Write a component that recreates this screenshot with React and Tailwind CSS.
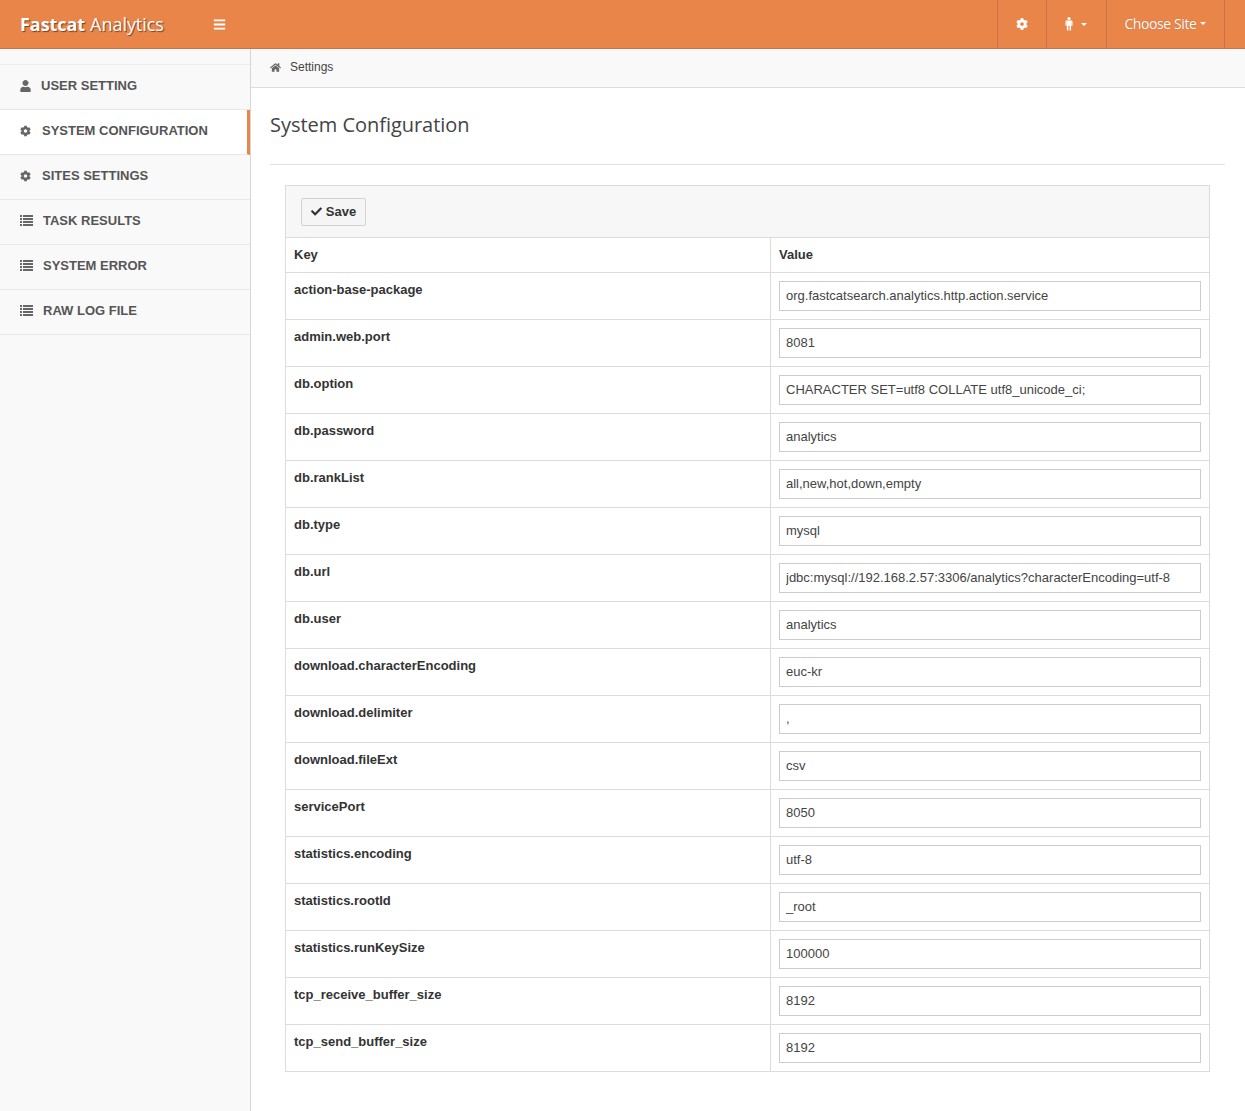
import { FaUser, FaCog, FaHome, FaCheck, FaBars } from "react-icons/fa";

function ListIcon() {
  return (
    <svg viewBox="0 0 13 11" className="w-[13px] h-[11px] text-[#666] shrink-0" fill="currentColor">
      <rect x="0" y="0" width="2" height="2" />
      <rect x="3" y="0" width="10" height="2" />
      <rect x="0" y="3" width="2" height="2" />
      <rect x="3" y="3" width="10" height="2" />
      <rect x="0" y="6" width="2" height="2" />
      <rect x="3" y="6" width="10" height="2" />
      <rect x="0" y="9" width="2" height="2" />
      <rect x="3" y="9" width="10" height="2" />
    </svg>
  );
}

function ManIcon() {
  return (
    <svg viewBox="0 0 8 14" className="w-[8px] h-[14px]" fill="currentColor">
      <circle cx="4" cy="1.6" r="1.6" />
      <path d="M1.6 3.6h4.8c.6 0 1.1.5 1.1 1.1v3.7c0 .8-1.1.8-1.1 0V5.2h-.3V13c0 1.1-1.5 1.1-1.5 0V8.8h-1.2V13c0 1.1-1.5 1.1-1.5 0V5.2h-.3v3.2c0 .8-1.1.8-1.1 0V4.7c0-.6.5-1.1 1.1-1.1z" />
    </svg>
  );
}

const menuItems = [
  { label: "USER SETTING", icon: FaUser, gap: "gap-[10px]" },
  { label: "SYSTEM CONFIGURATION", icon: FaCog, gap: "gap-[11px]", active: true },
  { label: "SITES SETTINGS", icon: FaCog, gap: "gap-[11px]" },
  { label: "TASK RESULTS", icon: ListIcon, gap: "gap-[10px]" },
  { label: "SYSTEM ERROR", icon: ListIcon, gap: "gap-[10px]" },
  { label: "RAW LOG FILE", icon: ListIcon, gap: "gap-[10px]" },
];

const settings = [
  ["action-base-package", "org.fastcatsearch.analytics.http.action.service"],
  ["admin.web.port", "8081"],
  ["db.option", "CHARACTER SET=utf8 COLLATE utf8_unicode_ci;"],
  ["db.password", "analytics"],
  ["db.rankList", "all,new,hot,down,empty"],
  ["db.type", "mysql"],
  ["db.url", "jdbc:mysql://192.168.2.57:3306/analytics?characterEncoding=utf-8"],
  ["db.user", "analytics"],
  ["download.characterEncoding", "euc-kr"],
  ["download.delimiter", ","],
  ["download.fileExt", "csv"],
  ["servicePort", "8050"],
  ["statistics.encoding", "utf-8"],
  ["statistics.rootId", "_root"],
  ["statistics.runKeySize", "100000"],
  ["tcp_receive_buffer_size", "8192"],
  ["tcp_send_buffer_size", "8192"],
];

function Caret() {
  return <span className="inline-block w-0 h-0 border-x-[3px] border-x-transparent border-t-[3px] border-t-white"></span>;
}

function Header() {
  return (
    <header className="h-[49px] bg-[#e98548] border-b border-b-[#c8744a] flex items-stretch text-white font-['Open_Sans',sans-serif]">
      <div className="w-[213px] flex items-center pl-[20px] text-[18px] leading-none [text-shadow:1px_1px_1px_rgba(0,0,0,0.5)] tracking-[-0.05px] whitespace-nowrap">
        <span className="font-bold">Fastcat</span>
        <span className="ml-[5px]">Analytics</span>
      </div>
      <div className="flex items-center">
        <FaBars className="w-[13px] h-[13px]" />
      </div>
      <div className="ml-auto flex items-stretch mr-[20px]">
        <div className="w-[49px] border-l border-l-[#c8744a] flex items-center justify-center">
          <FaCog className="w-[12px] h-[12px]" />
        </div>
        <div className="w-[60px] border-l border-l-[#c8744a] flex items-center justify-center gap-[8px] pr-[2px]">
          <ManIcon />
          <Caret />
        </div>
        <div className="w-[119px] border-x border-x-[#c8744a] flex items-center justify-center gap-[3px] text-[14px] tracking-[-0.4px] pb-[1px] pr-[1px] [text-shadow:0_0_1px_rgba(0,0,0,0.3)]">
          Choose Site
          <Caret />
        </div>
      </div>
    </header>
  );
}

function Sidebar() {
  return (
    <aside className="w-[251px] shrink-0 bg-[#f9f9f9] border-r border-r-[#d6d6d6] pt-[15px] font-['Liberation_Sans',sans-serif]">
      <ul className="border-t border-t-[#ececec]">
        {menuItems.map((item) => {
          const Icon = item.icon;
          return (
            <li
              key={item.label}
              className={
                item.active
                  ? "h-[45px] flex items-center pl-[20px] pb-[3px] border-b border-b-[#e8e8e8] border-r-[3px] border-r-[#e98548] bg-white"
                  : "h-[45px] flex items-center pl-[20px] pb-[3px] border-b border-b-[#e8e8e8]"
              }
            >
              <div className={"flex items-center text-[13px] font-bold text-[#555] leading-none " + item.gap}>
                {item.icon === ListIcon ? <ListIcon /> : <Icon className="w-[11px] h-[12px] text-[#666] shrink-0" />}
                {item.label}
              </div>
            </li>
          );
        })}
      </ul>
    </aside>
  );
}

function App() {
  return (
    <div className="h-screen overflow-hidden flex flex-col bg-white">
      <Header />
      <div className="flex flex-1 min-h-0">
        <Sidebar />
        <main className="flex-1 min-w-0 font-['Liberation_Sans',sans-serif] text-[#333]">
          <div className="h-[39px] bg-[#f9f9f9] border-b border-b-[#dcdcdc] flex items-center pl-[19px] pb-[2px] gap-[9px] text-[12px] text-[#444]">
            <FaHome className="w-[11px] h-[11px] text-[#666]" />
            <span>Settings</span>
          </div>
          <div className="pl-[19px] pr-[20px]">
            <div className="h-[77px] border-b border-b-[#e0e0e0] flex items-center pb-[2px]">
              <h1 className="text-[20px] tracking-[-0.03px] leading-none text-[#444] font-['Open_Sans',sans-serif]">System Configuration</h1>
            </div>
            <div className="mt-[20px] mx-[15px] border border-[#dcdcdc]">
              <div className="h-[52px] bg-[#f7f7f7] border-b border-b-[#dcdcdc] flex items-center pl-[15px]">
                <button className="h-[28px] w-[65px] flex items-center justify-center gap-[4px] bg-[#f5f5f5] border border-[#d2d2d2] rounded-[2px] text-[13px] font-bold text-[#333]">
                  <FaCheck className="w-[11px] h-[11px]" />
                  Save
                </button>
              </div>
              <table className="w-full border-collapse table-fixed text-[13px]">
                <colgroup>
                  <col className="w-[484px]" />
                  <col />
                </colgroup>
                <thead>
                  <tr className="h-[34px]">
                    <th className="text-left font-bold px-[8px] border-r border-r-[#dcdcdc]">Key</th>
                    <th className="text-left font-bold pl-[8.5px] pr-[8px]">Value</th>
                  </tr>
                </thead>
                <tbody>
                  {settings.map(([key, value]) => (
                    <tr key={key} className="h-[47px] border-t border-t-[#dcdcdc]">
                      <td className="align-top font-bold px-[8px] pt-[9px] leading-[16px] border-r border-r-[#dcdcdc]">{key}</td>
                      <td className="align-middle px-[8px]">
                        <input
                          readOnly
                          value={value}
                          className="block w-full h-[30px] pl-[6.5px] pr-[6px] bg-white border border-[#ccc] text-[13px] text-[#444] outline-none"
                        />
                      </td>
                    </tr>
                  ))}
                </tbody>
              </table>
            </div>
          </div>
        </main>
      </div>
    </div>
  );
}

export default App;
